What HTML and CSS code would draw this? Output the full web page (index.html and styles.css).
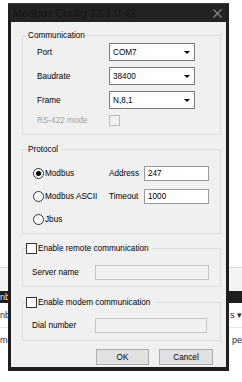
FILE: index.html
```html
<!DOCTYPE html>
<html lang="en">
<head>
<meta charset="UTF-8">
<meta name="viewport" content="width=device-width, initial-scale=1.0">
<title>Modbus Config</title>
<link rel="stylesheet" href="styles.css">
</head>
<body>

<div class="backdrop">
    <div class="bd-space"></div>
    <div class="bd-band"></div>
    <div class="bd-dark"><span>nb</span></div>
    <div class="bd-row"><span>nb</span><span>s &#9662;</span></div>
    <div class="bd-row bd-row2"><span>me</span><span>pe</span></div>
</div>

<div class="window">
    <div class="titlebar">
        <span class="title">Modbus Config 12.1.0.42</span>
        <svg class="close" width="9" height="9" viewBox="0 0 9 9">
            <path d="M0.5 0.5L8.5 8.5M8.5 0.5L0.5 8.5" stroke="#8a8a8a" stroke-width="1.1"/>
        </svg>
    </div>

    <div class="client">
        <div class="group group-comm">
            <span class="caption">Communication</span>
            <div class="row">
                <span class="lbl">Port</span>
                <div class="combo"><span>COM7</span><i class="arrow"></i></div>
            </div>
            <div class="row">
                <span class="lbl">Baudrate</span>
                <div class="combo"><span>38400</span><i class="arrow"></i></div>
            </div>
            <div class="row">
                <span class="lbl">Frame</span>
                <div class="combo"><span>N,8,1</span><i class="arrow"></i></div>
            </div>
            <div class="row row-small">
                <span class="lbl disabled">RS-422 mode</span>
                <span class="check check-disabled"></span>
            </div>
        </div>

        <div class="group group-proto">
            <span class="caption">Protocol</span>
            <div class="proto-grid">
                <label class="radio"><span class="dot on"></span>Modbus</label>
                <span class="plbl">Address</span>
                <div class="edit">247</div>

                <label class="radio"><span class="dot"></span>Modbus ASCII</label>
                <span class="plbl">Timeout</span>
                <div class="edit">1000</div>

                <label class="radio"><span class="dot"></span>Jbus</label>
            </div>
        </div>

        <div class="group group-check group-remote">
            <span class="caption caption-check"><span class="check"></span>Enable remote communication</span>
            <div class="row row-edit">
                <span class="lbl2">Server name</span>
                <div class="edit edit-off edit-wide"></div>
            </div>
        </div>

        <div class="group group-check group-modem">
            <span class="caption caption-check"><span class="check"></span>Enable modem communication</span>
            <div class="row row-edit">
                <span class="lbl2">Dial number</span>
                <div class="edit edit-off edit-wide2"></div>
            </div>
        </div>

        <div class="buttons">
            <button class="btn btn-ok">OK</button>
            <button class="btn">Cancel</button>
        </div>
    </div>
</div>

</body>
</html>
```

FILE: styles.css
```css
body {
    margin: 0;
    padding: 0;
    background-color: #fff;
    font-family: "Liberation Sans", Arial, sans-serif;
    font-size: 8.2px;
    color: #000;
    overflow: hidden;
}

/* app behind the dialog */
.backdrop {
    width: 242px;
}

.bd-space {
    height: 267px;
}

.bd-band {
    height: 23px;
    border-top: 1px solid #d8d8d8;
    background-color: #f4f4f4;
}

.bd-dark {
    height: 12px;
    background-color: #1e1e1e;
    color: #e8e8e8;
    font-size: 9px;
    line-height: 12px;
}

.bd-row {
    display: flex;
    justify-content: space-between;
    height: 24px;
    line-height: 24px;
    font-size: 9px;
    color: #2e2440;
    border-bottom: 1px solid #e8e8e8;
}

.bd-row2 {
    border-bottom: none;
}

/* dialog window */
.window {
    position: absolute;
    left: 8px;
    top: 3px;
    width: 215px;
    padding: 0 3px 4px 3px;
    background-color: #1f1f1f;
    border-top: 1px solid #3a3a3a;
}

.titlebar {
    height: 18px;
    display: flex;
    align-items: center;
    justify-content: space-between;
    padding: 0 4px 0 2px;
    background-color: #232323;
}

.title {
    font-size: 11px;
    color: #151515;
}

.close {
    display: block;
}

.client {
    height: 345px;
    background-color: #f0f0f0;
    padding: 13px 5px 0 11px;
    box-sizing: border-box;
    display: flex;
    flex-direction: column;
}

.client > * {
    flex: none;
}

.group {
    position: relative;
    border: 1px solid #dcdcdc;
    box-sizing: border-box;
}

.caption {
    position: absolute;
    top: -6px;
    left: 4px;
    padding: 0 2px 0 1px;
    background-color: #f0f0f0;
    line-height: 11px;
}

.caption-check {
    display: flex;
    align-items: center;
    left: 3px;
    padding: 0 3px 0 0;
}

.group-comm {
    height: 100px;
    padding: 7px 0 0 14px;
}

.row {
    display: flex;
    align-items: center;
    height: 18px;
    margin-bottom: 6px;
}

.row-small {
    height: 12px;
    margin-top: -1px;
}

.lbl {
    width: 72px;
}

.disabled {
    color: #a0a0a0;
}

.combo {
    width: 86px;
    height: 18px;
    border: 1px solid #7a7a7a;
    background-color: #fff;
    box-sizing: border-box;
    display: flex;
    align-items: center;
    justify-content: space-between;
    padding: 0 4px 0 3px;
}

.arrow {
    width: 0;
    height: 0;
    border-left: 3px solid transparent;
    border-right: 3px solid transparent;
    border-top: 3px solid #000;
}

.check {
    display: inline-block;
    width: 11px;
    height: 11px;
    border: 1px solid #333;
    background-color: #fff;
    box-sizing: border-box;
    margin-right: 1px;
}

.check-disabled {
    border-color: #bcbcbc;
    background-color: #f0f0f0;
}

.group-proto {
    height: 85px;
    margin-top: 14px;
    padding: 16px 0 0 10px;
}

.proto-grid {
    display: grid;
    grid-template-columns: 76px 35px 65px;
    grid-auto-rows: 15px;
    row-gap: 8px;
    align-items: center;
}

.radio {
    display: flex;
    align-items: center;
}

.dot {
    width: 11px;
    height: 11px;
    border: 1px solid #333;
    border-radius: 50%;
    background-color: #fff;
    box-sizing: border-box;
    margin-right: 1px;
    display: flex;
    align-items: center;
    justify-content: center;
}

.dot.on::after {
    content: "";
    width: 5px;
    height: 5px;
    border-radius: 50%;
    background-color: #000;
}

.edit {
    height: 15px;
    border: 1px solid #9a9a9a;
    background-color: #fff;
    box-sizing: border-box;
    padding-left: 3px;
    line-height: 13px;
}

.edit-off {
    border-color: #c6c6c6;
    background-color: #f0f0f0;
}

.edit-wide {
    width: 114px;
}

.edit-wide2 {
    width: 112px;
}

.group-check {
    height: 39px;
    padding: 0 0 0 9px;
}

.group-remote {
    margin-top: 14px;
    padding-top: 16px;
}

.group-modem {
    margin-top: 15px;
    padding-top: 15px;
}

.row-edit {
    height: 15px;
    margin: 0;
}

.lbl2 {
    width: 63px;
}

.buttons {
    display: flex;
    justify-content: flex-end;
    gap: 10px;
    margin-top: 8px;
    padding-right: 8px;
}

.btn {
    width: 54px;
    height: 16px;
    padding: 0;
    border: 1px solid #adadad;
    background-color: #e1e1e1;
    font-family: "Liberation Sans", Arial, sans-serif;
    font-size: 8.2px;
    color: #000;
}

.btn-ok {
    width: 53px;
}
```
